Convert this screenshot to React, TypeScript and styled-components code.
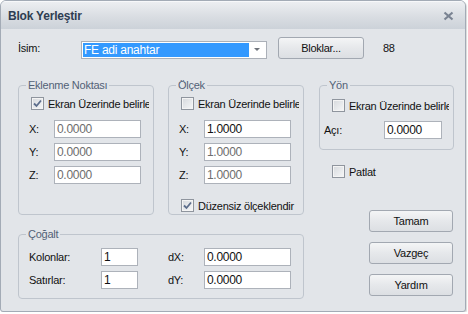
import React from "react";
import styled, { createGlobalStyle } from "styled-components";

const GlobalStyle = createGlobalStyle`
  html, body {
    margin: 0;
    padding: 0;
    background: #ffffff;
  }
  body {
    font-family: "Liberation Sans", Arial, sans-serif;
    font-size: 11px;
    letter-spacing: -0.25px;
    color: #111;
  }
`;

const Window = styled.div`
  width: 466px;
  height: 312px;
  box-sizing: border-box;
  border: 1px solid #a3abb6;
  border-radius: 6px 6px 3px 3px;
  background: #e2e5e9;
  display: flex;
  flex-direction: column;
  overflow: hidden;
  box-shadow: 1px 1px 1px rgba(0, 0, 0, 0.15);
`;

const TitleBar = styled.div`
  height: 27px;
  flex: none;
  display: flex;
  align-items: center;
  justify-content: space-between;
  padding: 0 11px 0 7px;
  background: linear-gradient(#eceef1, #d9dde2 55%, #ccd2d9);
  border-top: 1px solid #f7f8fa;
`;

const Title = styled.div`
  font-weight: bold;
  font-size: 12px;
  letter-spacing: -0.2px;
  color: #2e3d52;
  margin-top: 1px;
`;

const CloseIcon = () => (
  <svg width="11" height="10" viewBox="0 0 11 10">
    <path d="M1.5 1.5 L9.5 8.5 M9.5 1.5 L1.5 8.5" stroke="#7a8392" strokeWidth="2.2" />
  </svg>
);

const Body = styled.div`
  flex: 1;
  padding: 0 0 0 17px;
`;

const TopRow = styled.div`
  height: 22px;
  margin-top: 8px;
  display: flex;
  align-items: center;
`;

const FieldLabel = styled.span<{ $w: number; $gap?: number }>`
  width: ${(p) => p.$w}px;
  margin-left: ${(p) => p.$gap ?? 0}px;
  flex: none;
  white-space: nowrap;
`;

const Combo = styled.div`
  width: 186px;
  height: 18px;
  box-sizing: border-box;
  margin-top: 3px;
  border: 1px solid #abb0b8;
  background: #fff;
  display: flex;
  align-items: center;
  padding: 1px;
`;

const ComboSelection = styled.div`
  width: 166px;
  height: 14px;
  background: #3399ff;
  color: #fff;
  font-size: 12px;
  line-height: 14px;
  padding-left: 1px;
  box-sizing: border-box;
`;

const ComboArrow = styled.div`
  flex: 1;
  display: flex;
  justify-content: center;
  align-items: center;
  &::after {
    content: "";
    border-left: 3px solid transparent;
    border-right: 3px solid transparent;
    border-top: 3px solid #6f747c;
  }
`;

const PushButton = styled.button<{ $w: number; $gap?: number }>`
  width: ${(p) => p.$w}px;
  height: 22px;
  margin-left: ${(p) => p.$gap ?? 0}px;
  flex: none;
  box-sizing: border-box;
  border: 1px solid #a2a8b1;
  border-radius: 3px;
  background: linear-gradient(#f4f5f6, #e6e8eb 50%, #dcdfe3);
  font-family: inherit;
  font-size: 11px;
  letter-spacing: -0.25px;
  color: #111;
  padding: 0;
`;

const Count = styled.span`
  margin-left: 19px;
`;

const Main = styled.div`
  display: flex;
  margin-top: 19px;
`;

const LeftArea = styled.div`
  display: grid;
  grid-template-columns: 136px 136px;
  grid-template-rows: 137px 72px;
  column-gap: 14px;
  row-gap: 12px;
`;

const RightArea = styled.div`
  width: 135px;
  margin-left: 15px;
  display: flex;
  flex-direction: column;
`;

const Group = styled.fieldset<{ $span?: boolean; $padTop?: number; $h?: number }>`
  margin: 0;
  min-width: 0;
  padding: ${(p) => p.$padTop ?? 5}px 0 0 0;
  border: 1px solid #bfc5cd;
  border-radius: 4px;
  box-sizing: border-box;
  ${(p) => (p.$span ? "grid-column: 1 / span 2;" : "")}
  ${(p) => (p.$h ? `height: ${p.$h}px; flex: none;` : "")}
  display: flex;
  flex-direction: column;
`;

const Legend = styled.legend`
  margin-left: 7px;
  padding: 0 2px;
  line-height: 14px;
  color: #526176;
`;

const CheckRow = styled.label<{ $gapTop?: number; $indent?: number }>`
  display: flex;
  align-items: center;
  gap: 4px;
  height: 13px;
  margin: ${(p) => p.$gapTop ?? 0}px 4px 0 ${(p) => p.$indent ?? 12}px;
  white-space: nowrap;
  overflow: hidden;
`;

const Box = styled.span`
  width: 13px;
  height: 13px;
  flex: none;
  box-sizing: border-box;
  border: 1px solid #8f959e;
  background: linear-gradient(135deg, #d6d9dd, #f6f7f8);
  box-shadow: inset 0 0 0 1px #f4f4f4;
  display: flex;
  align-items: center;
  justify-content: center;
`;

const CheckMark = () => (
  <svg width="9" height="9" viewBox="0 0 9 9">
    <path d="M1 4.5 L3.5 7 L8 1.5" fill="none" stroke="#5d6e8c" strokeWidth="1.8" />
  </svg>
);

const Check = ({ checked, text }: { checked?: boolean; text: string }) => (
  <>
    <Box>{checked && <CheckMark />}</Box>
    <span>{text}</span>
  </>
);

const Rows = styled.div<{ $gapTop?: number; $indent?: number }>`
  display: flex;
  flex-direction: column;
  gap: 5px;
  margin-top: ${(p) => p.$gapTop ?? 0}px;
  padding-left: ${(p) => p.$indent ?? 10}px;
`;

const FieldRow = styled.div`
  display: flex;
  align-items: center;
  height: 18px;
`;

const Field = styled.input<{ $w: number; $dim?: boolean }>`
  width: ${(p) => p.$w}px;
  height: 18px;
  flex: none;
  box-sizing: border-box;
  border: 1px solid #adb2ba;
  background: #fff;
  padding: 0 0 0 2px;
  margin: 0;
  font-family: inherit;
  font-size: 12px;
  letter-spacing: -0.3px;
  color: ${(p) => (p.$dim ? "#6d6d6d" : "#111")};
  outline: none;
`;

const ButtonStack = styled.div`
  display: flex;
  flex-direction: column;
  align-items: flex-end;
  gap: 10px;
  margin-top: 32px;
  padding-right: 1px;
`;

const xyz = ["X:", "Y:", "Z:"];

export default function App() {
  return (
    <>
      <GlobalStyle />
      <Window>
        <TitleBar>
          <Title>Blok Yerleştir</Title>
          <CloseIcon />
        </TitleBar>
        <Body>
          <TopRow>
            <FieldLabel $w={63}>İsim:</FieldLabel>
            <Combo>
              <ComboSelection>FE adi anahtar</ComboSelection>
              <ComboArrow />
            </Combo>
            <PushButton $w={86} $gap={11}>
              Bloklar...
            </PushButton>
            <Count>88</Count>
          </TopRow>
          <Main>
            <LeftArea>
              <Group>
                <Legend>Eklenme Noktası</Legend>
                <CheckRow>
                  <Check checked text="Ekran Üzerinde belirle" />
                </CheckRow>
                <Rows $gapTop={10}>
                  {xyz.map((l) => (
                    <FieldRow key={l}>
                      <FieldLabel $w={25}>{l}</FieldLabel>
                      <Field $w={87} $dim readOnly value="0.0000" />
                    </FieldRow>
                  ))}
                </Rows>
              </Group>
              <Group>
                <Legend>Ölçek</Legend>
                <CheckRow>
                  <Check text="Ekran Üzerinde belirle" />
                </CheckRow>
                <Rows $gapTop={10}>
                  {xyz.map((l, i) => (
                    <FieldRow key={l}>
                      <FieldLabel $w={25}>{l}</FieldLabel>
                      <Field $w={87} $dim={i > 0} readOnly value="1.0000" />
                    </FieldRow>
                  ))}
                </Rows>
                <CheckRow $gapTop={15}>
                  <Check checked text="Düzensiz ölçeklendir" />
                </CheckRow>
              </Group>
              <Group $span $padTop={7}>
                <Legend>Çoğalt</Legend>
                <Rows>
                  <FieldRow>
                    <FieldLabel $w={72}>Kolonlar:</FieldLabel>
                    <Field $w={37} readOnly value="1" />
                    <FieldLabel $w={36} $gap={30}>
                      dX:
                    </FieldLabel>
                    <Field $w={87} readOnly value="0.0000" />
                  </FieldRow>
                  <FieldRow>
                    <FieldLabel $w={72}>Satırlar:</FieldLabel>
                    <Field $w={37} readOnly value="1" />
                    <FieldLabel $w={36} $gap={30}>
                      dY:
                    </FieldLabel>
                    <Field $w={87} readOnly value="0.0000" />
                  </FieldRow>
                </Rows>
              </Group>
            </LeftArea>
            <RightArea>
              <Group $h={72} $padTop={7}>
                <Legend>Yön</Legend>
                <CheckRow>
                  <Check text="Ekran Üzerinde belirle" />
                </CheckRow>
                <Rows $gapTop={9} $indent={4}>
                  <FieldRow>
                    <FieldLabel $w={60}>Açı:</FieldLabel>
                    <Field $w={58} readOnly value="0.0000" />
                  </FieldRow>
                </Rows>
              </Group>
              <CheckRow $gapTop={15} $indent={13}>
                <Check text="Patlat" />
              </CheckRow>
              <ButtonStack>
                <PushButton $w={84}>Tamam</PushButton>
                <PushButton $w={84}>Vazgeç</PushButton>
                <PushButton $w={84}>Yardım</PushButton>
              </ButtonStack>
            </RightArea>
          </Main>
        </Body>
      </Window>
    </>
  );
}
